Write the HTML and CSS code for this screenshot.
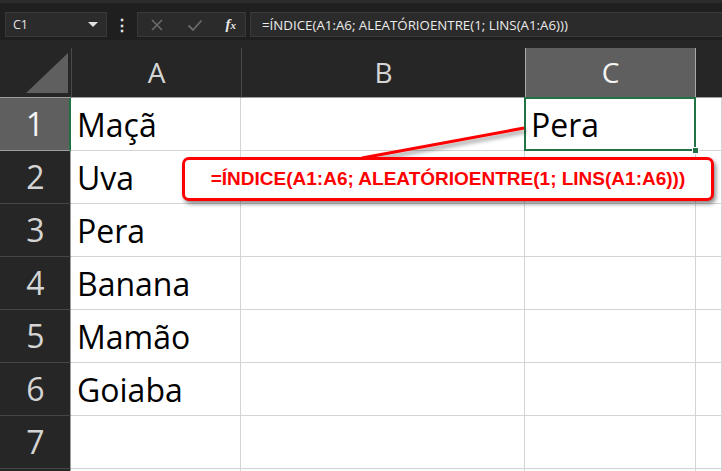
FILE: index.html
```html
<!DOCTYPE html>
<html lang="pt">
<head>
<meta charset="utf-8">
<title>Excel</title>
<link rel="stylesheet" href="styles.css">
</head>
<body>
<div class="app">
  <div class="fbar">
    <div class="namebox"><span class="ref">C1</span><span class="caret"></span></div>
    <div class="dots">⋮</div>
    <div class="btns">
      <svg class="ico" width="14" height="14" viewBox="0 0 14 14"><path d="M2 2L12 12M12 2L2 12" stroke="#6b6b6b" stroke-width="1.6" fill="none"/></svg>
      <svg class="ico" width="16" height="14" viewBox="0 0 16 14"><path d="M1.5 7.5L6 12L14.5 2.5" stroke="#6b6b6b" stroke-width="1.8" fill="none"/></svg>
      <span class="fx">f<span class="fxx">x</span></span>
    </div>
    <div class="formula">=ÍNDICE(A1:A6; ALEATÓRIOENTRE(1; LINS(A1:A6)))</div>
  </div>
  <div class="sheet">
    <div class="grid">
      <div class="corner"><span class="tri"></span></div>
      <div class="ch">A</div>
      <div class="ch">B</div>
      <div class="ch sel">C</div>
      <div class="ch last"></div>

      <div class="rh sel">1</div>
      <div class="c">Maçã</div>
      <div class="c"></div>
      <div class="c active">Pera<span class="handle"></span></div>
      <div class="c"></div>

      <div class="rh">2</div>
      <div class="c">Uva</div>
      <div class="c"></div>
      <div class="c"></div>
      <div class="c"></div>

      <div class="rh">3</div>
      <div class="c">Pera</div>
      <div class="c"></div>
      <div class="c"></div>
      <div class="c"></div>

      <div class="rh">4</div>
      <div class="c">Banana</div>
      <div class="c"></div>
      <div class="c"></div>
      <div class="c"></div>

      <div class="rh">5</div>
      <div class="c">Mamão</div>
      <div class="c"></div>
      <div class="c"></div>
      <div class="c"></div>

      <div class="rh">6</div>
      <div class="c">Goiaba</div>
      <div class="c"></div>
      <div class="c"></div>
      <div class="c"></div>

      <div class="rh">7</div>
      <div class="c"></div>
      <div class="c"></div>
      <div class="c"></div>
      <div class="c"></div>

      <div class="rh"></div>
      <div class="c"></div>
      <div class="c"></div>
      <div class="c"></div>
      <div class="c"></div>
    </div>
  </div>
  <svg class="pointer" width="722" height="471" viewBox="0 0 722 471">
    <defs>
      <filter id="sh" x="-20%" y="-50%" width="140%" height="200%">
        <feDropShadow dx="2" dy="3" stdDeviation="2" flood-color="#000" flood-opacity="0.45"/>
      </filter>
    </defs>
    <line x1="362" y1="158" x2="524" y2="128" stroke="#ff0000" stroke-width="3" filter="url(#sh)"/>
  </svg>
  <div class="callout">=ÍNDICE(A1:A6; ALEATÓRIOENTRE(1; LINS(A1:A6)))</div>
</div>
</body>
</html>
```

FILE: styles.css
```css
* { box-sizing: border-box; }
html, body { margin: 0; padding: 0; }
body { width: 722px; height: 471px; overflow: hidden; background: #1f1f1f; }

.app {
  position: relative;
  width: 722px;
  height: 471px;
  overflow: hidden;
  background: #1f1f1f;
  font-family: "Open Sans", "Noto Sans", sans-serif;
}

.fbar {
  height: 40px;
  display: flex;
  align-items: flex-start;
  padding: 9px 0 0 5px;
  border-top: 3px solid #2c2c2c;
  background: #1f1f1f;
}

.namebox {
  width: 102px;
  height: 25px;
  background: #2b2b2b;
  border: 1px solid #3a3a3a;
  display: flex;
  align-items: center;
  justify-content: space-between;
  padding: 0 8px 0 7px;
  color: #e6e6e6;
  font-size: 12.5px;
}
.caret {
  width: 0; height: 0;
  border-left: 5px solid transparent;
  border-right: 5px solid transparent;
  border-top: 5px solid #e0e0e0;
}

.dots {
  width: 30px;
  height: 25px;
  display: flex;
  align-items: center;
  justify-content: center;
  color: #e6e6e6;
  font-size: 16px;
  font-weight: bold;
}

.btns {
  width: 109px;
  height: 25px;
  background: #2b2b2b;
  border: 1px solid #3a3a3a;
  display: flex;
  align-items: center;
  justify-content: space-between;
  padding: 0 9px 0 12px;
}
.ico { display: block; }
.fx {
  font-family: "Liberation Serif", "DejaVu Serif", serif;
  font-style: italic;
  font-weight: bold;
  color: #e8e8e8;
  font-size: 15px;
  line-height: 1;
}
.fxx { font-size: 11px; }

.formula {
  flex: 1;
  height: 25px;
  margin-left: 4px;
  background: #2b2b2b;
  border: 1px solid #3a3a3a;
  border-right: none;
  display: flex;
  align-items: center;
  padding-left: 11px;
  color: #ececec;
  font-size: 13.3px;
  white-space: nowrap;
}

.sheet {
  background: #262626;
  padding-top: 8px;
  height: 431px;
}

.grid {
  display: grid;
  grid-template-columns: 71px 170px 284px 171px 26px;
  grid-template-rows: 50px repeat(7, 53px) 53px;
}

.corner {
  position: relative;
  background: #262626;
  border-bottom: 1px solid #9e9e9e;
}
.tri {
  position: absolute;
  right: 3px;
  bottom: 4px;
  width: 0; height: 0;
  border-left: 42px solid transparent;
  border-bottom: 40px solid #5f5f5f;
}

.ch {
  background: #262626;
  border-left: 1px solid #4a4a4a;
  border-bottom: 1px solid #9e9e9e;
  color: #d4d4d4;
  font-size: 28px;
  display: flex;
  align-items: center;
  justify-content: center;
  line-height: 1;
  padding-bottom: 1px;
}
.ch.sel {
  background: #5f5f5f;
  color: #f4f4f4;
  border-left-color: #a9a9a9;
  border-right: 1px solid #a9a9a9;
}
.ch.last { border-left: none; }

.rh {
  background: #262626;
  border-bottom: 1px solid #464646;
  border-right: 1px solid #9e9e9e;
  color: #d4d4d4;
  font-size: 32px;
  display: flex;
  align-items: center;
  justify-content: center;
  line-height: 1;
  padding-left: 1px;
}
.rh.sel {
  background: #5f5f5f;
  color: #f4f4f4;
  border-bottom-color: #9e9e9e;
  border-right: 2px solid #217346;
}

.c {
  position: relative;
  background: #ffffff;
  border-right: 1px solid #d4d4d4;
  border-bottom: 1px solid #d4d4d4;
  color: #000;
  font-family: "Open Sans", "Noto Sans", sans-serif;
  font-size: 32px;
  display: flex;
  align-items: center;
  padding-left: 6px;
  padding-top: 2px;
  line-height: 1;
  white-space: nowrap;
}
.c.active::after {
  content: "";
  position: absolute;
  left: -1px; top: -1px; right: -1px; bottom: -1px;
  border: 2px solid #217346;
}
.handle {
  position: absolute;
  right: -4px;
  bottom: -4px;
  width: 7px;
  height: 7px;
  background: #217346;
  border: 1px solid #fff;
  z-index: 2;
}

.pointer {
  position: absolute;
  left: 0; top: 0;
  pointer-events: none;
}

.callout {
  position: absolute;
  left: 182px;
  top: 157px;
  width: 532px;
  height: 44px;
  background: #fff;
  border: 3px solid #ff0000;
  border-radius: 7px;
  box-shadow: 2px 3px 4px rgba(0,0,0,0.45);
  color: #ff0000;
  font-family: "Liberation Sans", Arial, sans-serif;
  font-weight: bold;
  font-size: 19px;
  display: flex;
  align-items: center;
  justify-content: center;
  white-space: nowrap;
}
```
